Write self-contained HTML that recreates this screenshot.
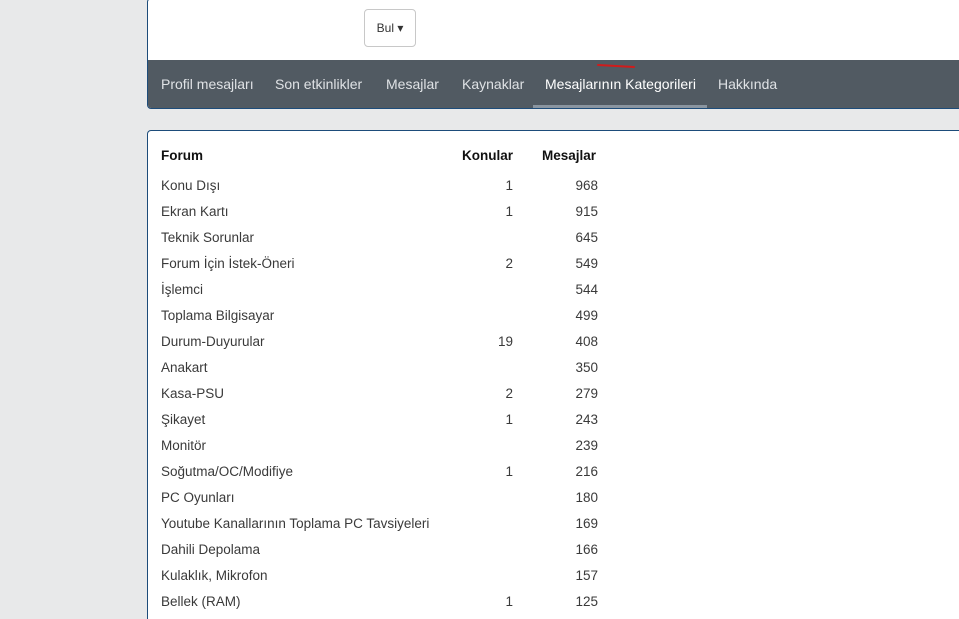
<!DOCTYPE html>
<html style="overflow:hidden;height:619px"><head><style>
body{margin:0;width:959px;height:619px;overflow:hidden;background:#e8e9ea;font-family:"Liberation Sans",sans-serif;position:relative}
.top{position:absolute;left:147px;top:-2px;width:820px;height:109px;background:#fff;border:1px solid #1d4c7a;border-radius:4px;overflow:hidden}
.bul{position:absolute;left:216px;top:10px;width:50px;height:36px;border:1px solid #c8c8c8;border-radius:4px;font-size:12px;color:#333;text-align:center;line-height:36px}
.nav{position:absolute;left:0;top:61px;width:100%;height:49px;background:#515a62}
.nav span{position:absolute;top:16px;font-size:14px;color:#dfe2e5}
.nav .act{color:#fff}
.ul{position:absolute;left:385px;top:45px;width:174px;height:4px;background:#8a95a0}
.red{position:absolute;left:597px;top:65px;width:38px;height:2px;background:#d01b1b;border-radius:1px;transform:rotate(3deg)}
.bot{position:absolute;left:147px;top:130px;width:820px;height:489px;background:#fff;border:1px solid #1d4c7a;border-bottom:none;border-radius:4px 4px 0 0}
.r{position:absolute;font-size:13.5px;color:#3a3a3a}
.h{font-weight:bold;color:#111}
</style></head><body>
<div class="top">
<div class="bul">Bul &#9662;</div>
<div class="nav">
<span style="left:13px">Profil mesajları</span>
<span style="left:127px">Son etkinlikler</span>
<span style="left:238px">Mesajlar</span>
<span style="left:314px">Kaynaklar</span>
<span class="act" style="left:397px">Mesajlarının Kategorileri</span>
<span style="left:570px">Hakkında</span>
<div class="ul"></div>
</div>
</div>
<div class="red"></div>
<div class="bot"></div>
<div class="r h" style="left:161px;top:148px">Forum</div>
<div class="r h" style="left:462px;top:148px">Konular</div>
<div class="r h" style="left:542px;top:148px">Mesajlar</div>
<div class="r" style="left:161px;top:178px">Konu Dışı</div><div class="r" style="right:446px;top:178px">1</div><div class="r" style="right:361px;top:178px">968</div>
<div class="r" style="left:161px;top:204px">Ekran Kartı</div><div class="r" style="right:446px;top:204px">1</div><div class="r" style="right:361px;top:204px">915</div>
<div class="r" style="left:161px;top:230px">Teknik Sorunlar</div><div class="r" style="right:361px;top:230px">645</div>
<div class="r" style="left:161px;top:256px">Forum İçin İstek-Öneri</div><div class="r" style="right:446px;top:256px">2</div><div class="r" style="right:361px;top:256px">549</div>
<div class="r" style="left:161px;top:282px">İşlemci</div><div class="r" style="right:361px;top:282px">544</div>
<div class="r" style="left:161px;top:308px">Toplama Bilgisayar</div><div class="r" style="right:361px;top:308px">499</div>
<div class="r" style="left:161px;top:334px">Durum-Duyurular</div><div class="r" style="right:446px;top:334px">19</div><div class="r" style="right:361px;top:334px">408</div>
<div class="r" style="left:161px;top:360px">Anakart</div><div class="r" style="right:361px;top:360px">350</div>
<div class="r" style="left:161px;top:386px">Kasa-PSU</div><div class="r" style="right:446px;top:386px">2</div><div class="r" style="right:361px;top:386px">279</div>
<div class="r" style="left:161px;top:412px">Şikayet</div><div class="r" style="right:446px;top:412px">1</div><div class="r" style="right:361px;top:412px">243</div>
<div class="r" style="left:161px;top:438px">Monitör</div><div class="r" style="right:361px;top:438px">239</div>
<div class="r" style="left:161px;top:464px">Soğutma/OC/Modifiye</div><div class="r" style="right:446px;top:464px">1</div><div class="r" style="right:361px;top:464px">216</div>
<div class="r" style="left:161px;top:490px">PC Oyunları</div><div class="r" style="right:361px;top:490px">180</div>
<div class="r" style="left:161px;top:516px">Youtube Kanallarının Toplama PC Tavsiyeleri</div><div class="r" style="right:361px;top:516px">169</div>
<div class="r" style="left:161px;top:542px">Dahili Depolama</div><div class="r" style="right:361px;top:542px">166</div>
<div class="r" style="left:161px;top:568px">Kulaklık, Mikrofon</div><div class="r" style="right:361px;top:568px">157</div>
<div class="r" style="left:161px;top:594px">Bellek (RAM)</div><div class="r" style="right:446px;top:594px">1</div><div class="r" style="right:361px;top:594px">125</div>
</body></html>
